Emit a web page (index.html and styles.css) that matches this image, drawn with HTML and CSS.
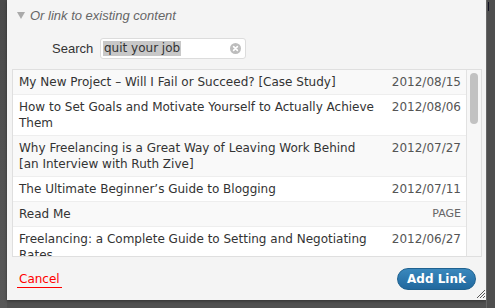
FILE: index.html
```html
<!DOCTYPE html>
<html>
<head>
<meta charset="utf-8">
<link rel="stylesheet" href="styles.css">
</head>
<body>
<div class="screen">
  <div class="side-left"></div>
  <div class="dialog">
    <div class="toggle"><span class="tri"></span><span class="toggle-text">Or link to existing content</span></div>
    <div class="search-row">
      <label class="search-label">Search</label>
      <div class="search-box">
        <span class="search-text">quit your job</span>
        <span class="clear">
          <svg width="11" height="11" viewBox="0 0 11 11"><circle cx="5.5" cy="5.5" r="5.5" fill="#bdbdbd"/><path d="M3.6 3.6 L7.4 7.4 M7.4 3.6 L3.6 7.4" stroke="#fff" stroke-width="1.6" stroke-linecap="round"/></svg>
        </span>
      </div>
    </div>
    <div class="results">
      <ul class="list">
        <li class="row alt"><span class="title">My New Project – Will I Fail or Succeed? [Case Study]</span><span class="info">2012/08/15</span></li>
        <li class="row"><span class="title">How to Set Goals and Motivate Yourself to Actually Achieve Them</span><span class="info">2012/08/06</span></li>
        <li class="row alt"><span class="title">Why Freelancing is a Great Way of Leaving Work Behind [an Interview with Ruth Zive]</span><span class="info">2012/07/27</span></li>
        <li class="row"><span class="title">The Ultimate Beginner’s Guide to Blogging</span><span class="info">2012/07/11</span></li>
        <li class="row alt"><span class="title">Read Me</span><span class="info page">PAGE</span></li>
        <li class="row"><span class="title">Freelancing: a Complete Guide to Setting and Negotiating Rates</span><span class="info">2012/06/27</span></li>
      </ul>
      <div class="scrollbar"><div class="thumb"></div></div>
    </div>
    <div class="footer">
      <a class="cancel">Cancel</a>
      <button class="add">Add Link</button>
      <svg class="grip" width="9" height="9" viewBox="0 0 9 9"><path d="M1 9 L9 1 M4 9 L9 4 M7 9 L9 7" stroke="#555" stroke-width="1"/></svg>
    </div>
  </div>
  <div class="side-right"><div class="mark"></div></div>
</div>
</body>
</html>
```
FILE: styles.css
```css
html, body { margin: 0; padding: 0; }
body { background: #505050; width: 495px; height: 308px; overflow: hidden; }
.screen { display: flex; height: 308px; }
.side-left { width: 7px; background: linear-gradient(#4a4a4a, #585858); }
.side-right { width: 8px; background: #4e4e4e; border-left: 1px solid #666; position: relative; }
.mark { position: absolute; left: 1px; top: 2px; width: 1px; height: 9px; background: #112; }
.dialog {
  width: 479px; height: 300px; background: #f4f4f4;
  display: flex; flex-direction: column; position: relative;
  box-shadow: 0 1px 3px rgba(0,0,0,.4);
}
.toggle { display: flex; align-items: center; height: 30px; padding-left: 10px; }
.tri { width: 0; height: 0; border-left: 4px solid transparent; border-right: 4px solid transparent; border-top: 7px solid #aaa; margin-right: 5px; margin-top: 1px; }
.toggle-text { font: italic 13px "Liberation Sans", Arial, sans-serif; color: #666; }
.search-row { display: flex; align-items: center; height: 22px; margin-top: 7px; }
.search-label { font: 13px "Liberation Sans", Arial, sans-serif; color: #333; margin-left: 45px; width: 48px; }
.search-box { width: 138px; height: 19px; border: 1px solid #dcdcdc; border-radius: 3px; background: #fff; display: flex; align-items: center; justify-content: space-between; padding: 0 4px 0 2px; box-sizing: content-box; }
.search-text { font: 12px "DejaVu Sans", Verdana, sans-serif; color: #333; background: #c8c8c8; line-height: 15px; padding: 0 1px; }
.clear { display: flex; }
.results { margin: 10px 0 0 5px; width: 468px; height: 186px; border: 1px solid #dfdfdf; background: #fff; display: flex; overflow: hidden; }
.list { list-style: none; margin: 0; padding: 0; width: 453px; border-right: 1px solid #e2e2e2; }
.row { display: flex; justify-content: space-between; align-items: flex-start; padding: 4px 5px 4px 6px; border-bottom: 1px solid #eee; font: 12px/16px "DejaVu Sans", Verdana, sans-serif; color: #333; background: #fff; }
.row.alt { background: #f9f9f9; }
.title { flex: 1; padding-right: 16px; }
.info { color: #555; white-space: nowrap; }
.info.page { font-size: 11px; color: #666; }
.scrollbar { flex: 1; position: relative; background: #f7f7f7; }
.thumb { position: absolute; left: 3px; top: 3px; width: 8px; height: 51px; border-radius: 4px; background: #c2c2c2; }
.footer { flex: 1; display: flex; align-items: center; justify-content: space-between; padding: 0 10px 0 10px; position: relative; }
.cancel { font: 12px "DejaVu Sans", Verdana, sans-serif; color: #f00; border-bottom: 1px solid #f00; padding: 0 2px 1px; margin-top: 2px; }
.add { font: bold 12px "DejaVu Sans", Verdana, sans-serif; color: #fff; background: linear-gradient(#3a88bd, #21689e); border: 1px solid #1f6290; border-radius: 11px; height: 22px; padding: 0 9px; }
.grip { position: absolute; right: 1px; bottom: 2px; }
```
